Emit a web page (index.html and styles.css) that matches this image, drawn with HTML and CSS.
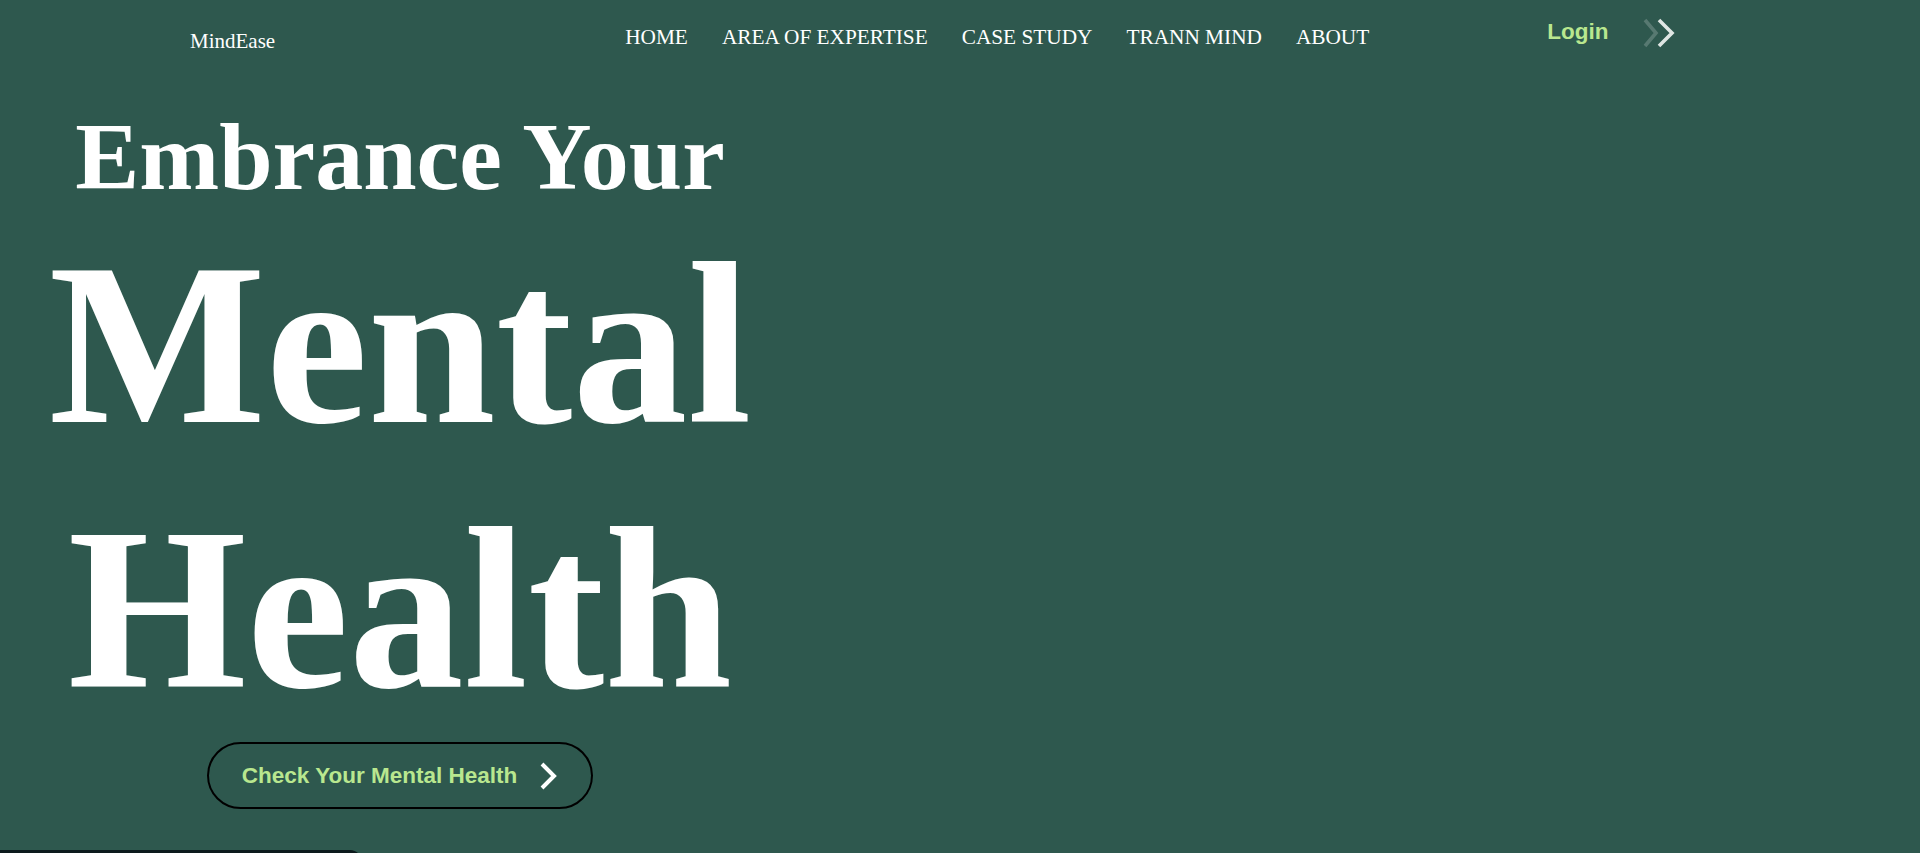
FILE: index.html
```html
<!DOCTYPE html>
<html lang="en">
<head>
<meta charset="utf-8">
<title>MindEase</title>
<link rel="stylesheet" href="styles.css">
</head>
<body>
<header class="site-header">
  <div class="logo">MindEase</div>
  <nav class="main-nav">
    <a href="#" class="nav-link">HOME</a>
    <a href="#" class="nav-link">AREA OF EXPERTISE</a>
    <a href="#" class="nav-link">CASE STUDY</a>
    <a href="#" class="nav-link">TRANN MIND</a>
    <a href="#" class="nav-link">ABOUT</a>
  </nav>
  <a href="#" class="login">Login</a>
  <svg class="login-arrows" width="34" height="30" viewBox="0 0 34 30" aria-hidden="true">
    <polyline points="3,2 14,15 3,28" fill="none" stroke="rgba(255,255,255,0.2)" stroke-width="3.6"/>
    <polyline points="17,2 30,15 17,28" fill="none" stroke="#dfe6e3" stroke-width="3.6"/>
  </svg>
</header>

<main>
  <section class="hero">
    <p class="hero-kicker">Embrance Your</p>
    <h1 class="hero-title">Mental<br>Health</h1>
    <a href="#" class="cta">
      <span>Check Your Mental Health</span>
      <svg width="18" height="28" viewBox="0 0 18 28" aria-hidden="true">
        <polyline points="3,2 15,14 3,26" fill="none" stroke="#ffffff" stroke-width="4"/>
      </svg>
    </a>
  </section>

  <section class="feature">
    <div class="feature-card"></div>
  </section>

  <section class="more"></section>
</main>
</body>
</html>
```

FILE: styles.css
```css
html, body {
  margin: 0;
  padding: 0;
}

html::-webkit-scrollbar {
  width: 17px;
  background: #f1f1f1;
}

html::-webkit-scrollbar-thumb {
  background: #c1c1c1;
  border: 2px solid #f1f1f1;
}

body {
  background: #2e584e;
  color: #ffffff;
  font-family: "Liberation Serif", "Times New Roman", serif;
}

a {
  text-decoration: none;
  color: inherit;
}

.site-header {
  display: flex;
  align-items: flex-start;
  height: 70px;
  padding-left: 190px;
}

.logo {
  margin-top: 29px;
  font-size: 21px;
  line-height: 24px;
}

.main-nav {
  display: flex;
  gap: 34px;
  margin-left: 350px;
  margin-top: 25px;
}

.nav-link {
  font-size: 21.3px;
  line-height: 24px;
  color: #ffffff;
}

.login {
  margin-left: 178px;
  margin-top: 19px;
  font-family: "Liberation Sans", Arial, sans-serif;
  font-weight: bold;
  font-size: 22.5px;
  line-height: 25px;
  color: #b9e78f;
}

.login-arrows {
  margin-left: 33px;
  margin-top: 18px;
}

.hero {
  width: 800px;
  display: flex;
  flex-direction: column;
  align-items: center;
  text-align: center;
}

.hero-kicker {
  margin: 34px 0 0;
  font-weight: bold;
  font-size: 96px;
  line-height: 105px;
}

.hero-title {
  margin: 3px 0 0;
  font-weight: bold;
  font-size: 230px;
  line-height: 265px;
}

.cta {
  box-sizing: border-box;
  display: inline-flex;
  align-items: center;
  gap: 22px;
  height: 67px;
  margin-top: 0;
  padding: 0 34px 0 33px;
  border: 2px solid #000000;
  border-radius: 40px;
  font-family: "Liberation Sans", Arial, sans-serif;
  font-weight: bold;
  font-size: 22.5px;
  color: #b9e78f;
}

.cta svg {
  display: block;
}

.feature {
  padding-top: 41px;
}

.feature-card {
  width: 362px;
  height: 520px;
  background: #0c1a1c;
  border-top-right-radius: 12px;
}

.more {
  height: 2789px;
}
```
